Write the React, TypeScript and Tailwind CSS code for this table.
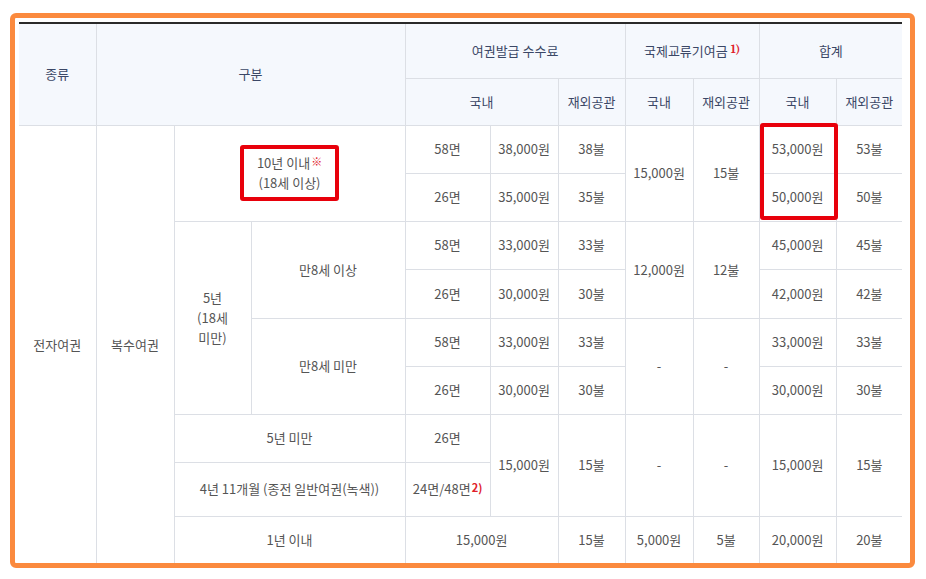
import React from 'react';

const font = { fontFamily: '"Noto Sans CJK KR", "Noto Sans", sans-serif' };

const th = 'border border-[#dcdfe5] bg-[#f5f8fd] text-[#3b4766] font-normal text-center align-middle';
const td = 'border border-[#dcdfe5] text-[#555] text-center align-middle';

const Sup: React.FC<{ children: React.ReactNode }> = ({ children }) => (
  <sup className="text-[11px] font-bold text-[#e0202a] ml-[1px] relative -top-[2px]">{children}</sup>
);

export default function App() {
  const cols = [77, 78, 77, 154, 85, 68, 67, 68, 66, 77, 66];

  return (
    <div className="w-[926px] h-[579px] bg-white pt-[13px] pl-[10px]" style={font}>
      <div className="w-[905px] h-[555px] border-[5px] border-[#fb8a3e] rounded-[6px] overflow-hidden pt-[4px] pl-[4px]">
        <div className="relative w-[883px]">
          <table className="w-[883px] table-fixed border-collapse border-t-2 border-t-[#2a2a2a] text-[13px] leading-[20px]">
            <colgroup>
              {cols.map((w, i) => (
                <col key={i} style={{ width: w }} />
              ))}
            </colgroup>
            <thead>
              <tr className="h-[55px]">
                <th rowSpan={2} className={`${th} border-l-0`}>종류</th>
                <th rowSpan={2} colSpan={3} className={th}>구분</th>
                <th colSpan={3} className={th}>여권발급 수수료</th>
                <th colSpan={2} className={th}>
                  국제교류기여금 <sup className="text-[11px] text-[#e0202a] font-serif font-bold relative -top-[3px]">1)</sup>
                </th>
                <th colSpan={2} className={`${th} border-r-0`}>합계</th>
              </tr>
              <tr className="h-[47px]">
                <th colSpan={2} className={th}>국내</th>
                <th className={th}>재외공관</th>
                <th className={th}>국내</th>
                <th className={th}>재외공관</th>
                <th className={th}>국내</th>
                <th className={`${th} border-r-0`}>재외공관</th>
              </tr>
            </thead>
            <tbody>
              <tr className="h-[48px]">
                <td rowSpan={9} className={`${td} border-l-0`}>전자여권</td>
                <td rowSpan={9} className={td}>복수여권</td>
                <td rowSpan={2} colSpan={2} className={td}>
                  <div className="inline-block border-4 border-[#e8000b] rounded-[3px] px-[13px] py-[4px] leading-[20px]">
                    10년 이내<Sup>※</Sup>
                    <br />
                    (18세 이상)
                  </div>
                </td>
                <td className={td}>58면</td>
                <td className={td}>38,000원</td>
                <td className={td}>38불</td>
                <td rowSpan={2} className={td}>15,000원</td>
                <td rowSpan={2} className={td}>15불</td>
                <td className={td}>53,000원</td>
                <td className={`${td} border-r-0`}>53불</td>
              </tr>
              <tr className="h-[48px]">
                <td className={td}>26면</td>
                <td className={td}>35,000원</td>
                <td className={td}>35불</td>
                <td className={td}>50,000원</td>
                <td className={`${td} border-r-0`}>50불</td>
              </tr>
              <tr className="h-[48px]">
                <td rowSpan={4} className={td}>
                  5년
                  <br />
                  (18세
                  <br />
                  미만)
                </td>
                <td rowSpan={2} className={td}>만8세 이상</td>
                <td className={td}>58면</td>
                <td className={td}>33,000원</td>
                <td className={td}>33불</td>
                <td rowSpan={2} className={td}>12,000원</td>
                <td rowSpan={2} className={td}>12불</td>
                <td className={td}>45,000원</td>
                <td className={`${td} border-r-0`}>45불</td>
              </tr>
              <tr className="h-[49px]">
                <td className={td}>26면</td>
                <td className={td}>30,000원</td>
                <td className={td}>30불</td>
                <td className={td}>42,000원</td>
                <td className={`${td} border-r-0`}>42불</td>
              </tr>
              <tr className="h-[48px]">
                <td rowSpan={2} className={td}>만8세 미만</td>
                <td className={td}>58면</td>
                <td className={td}>33,000원</td>
                <td className={td}>33불</td>
                <td rowSpan={2} className={td}>-</td>
                <td rowSpan={2} className={td}>-</td>
                <td className={td}>33,000원</td>
                <td className={`${td} border-r-0`}>33불</td>
              </tr>
              <tr className="h-[48px]">
                <td className={td}>26면</td>
                <td className={td}>30,000원</td>
                <td className={td}>30불</td>
                <td className={td}>30,000원</td>
                <td className={`${td} border-r-0`}>30불</td>
              </tr>
              <tr className="h-[48px]">
                <td colSpan={2} className={td}>5년 미만</td>
                <td className={td}>26면</td>
                <td rowSpan={2} className={td}>15,000원</td>
                <td rowSpan={2} className={td}>15불</td>
                <td rowSpan={2} className={td}>-</td>
                <td rowSpan={2} className={td}>-</td>
                <td rowSpan={2} className={td}>15,000원</td>
                <td rowSpan={2} className={`${td} border-r-0`}>15불</td>
              </tr>
              <tr className="h-[54px]">
                <td colSpan={2} className={td}>4년 11개월 (종전 일반여권(녹색))</td>
                <td className={td}>
                  24면/48면<Sup>2)</Sup>
                </td>
              </tr>
              <tr className="h-[48px]">
                <td colSpan={2} className={td}>1년 이내</td>
                <td colSpan={2} className={td}>15,000원</td>
                <td className={td}>15불</td>
                <td className={td}>5,000원</td>
                <td className={td}>5불</td>
                <td className={td}>20,000원</td>
                <td className={`${td} border-r-0`}>20불</td>
              </tr>
            </tbody>
          </table>
          {/* highlight over 합계 국내 first two rows */}
          <div className="absolute left-[741px] top-[101px] w-[78px] h-[97px] border-4 border-[#e8000b] rounded-[3px] pointer-events-none" />
        </div>
      </div>
    </div>
  );
}
